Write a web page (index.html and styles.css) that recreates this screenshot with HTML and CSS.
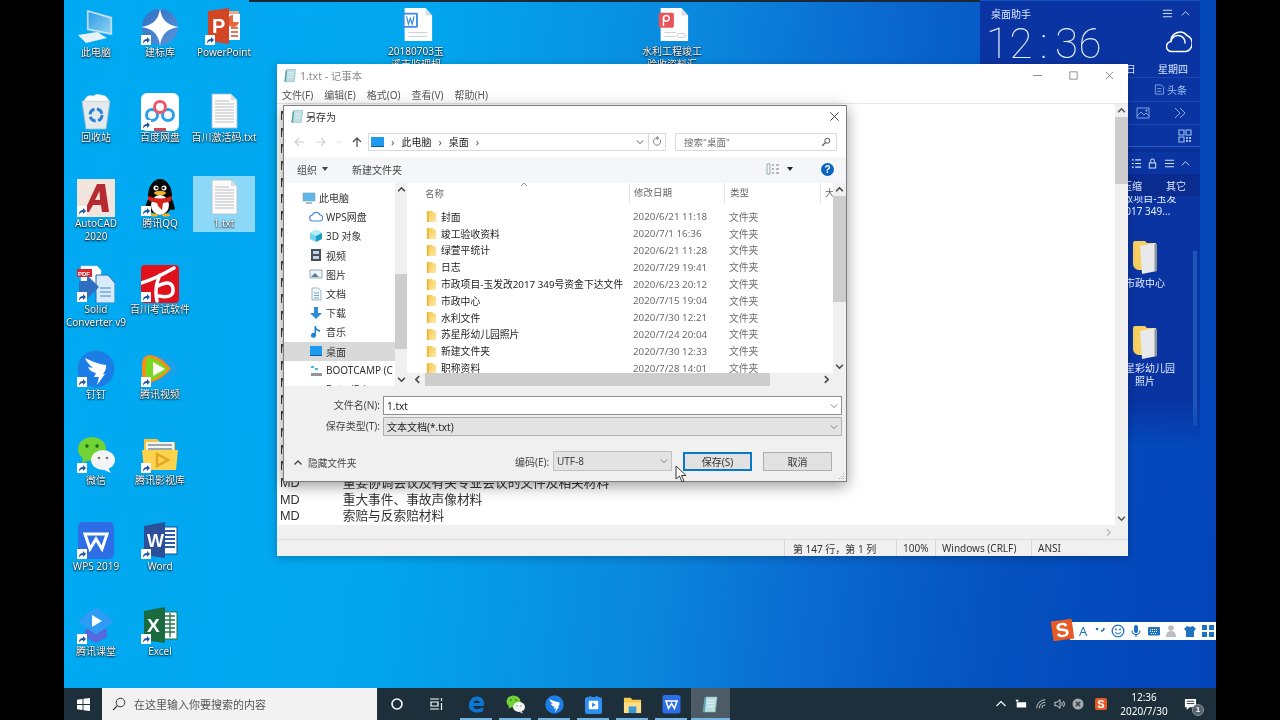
FILE: index.html
```html
<!DOCTYPE html>
<html lang="zh-CN">
<head>
<meta charset="utf-8">
<title>另存为</title>
<link rel="stylesheet" href="styles.css">
</head>
<body>
<svg class="defs" aria-hidden="true">
  <defs>
    <linearGradient id="g-star" x1="0" y1="0" x2="1" y2="1"><stop offset="0" stop-color="#2f6fc4"/><stop offset="1" stop-color="#5a93d8"/></linearGradient>
    <linearGradient id="g-screen" x1="0" y1="0" x2="1" y2="1"><stop offset="0" stop-color="#2b9de6"/><stop offset="1" stop-color="#8fd0f5"/></linearGradient>
    <linearGradient id="g-folder" x1="0" y1="0" x2="1" y2="1"><stop offset="0" stop-color="#f4c64c"/><stop offset="1" stop-color="#ffe9a6"/></linearGradient>
    <symbol id="i-pc" viewBox="0 0 38 38"><path d="M10 2 35 9V27L10 22Z" fill="#cfeaf7" stroke="#7db8d8" stroke-width=".6"/><path d="M11.500 4 33.500 10.500V25L11.500 20.500Z" fill="url(#g-screen)"/><path d="M22 24v4l5 1" fill="none" stroke="#b9dbea" stroke-width="1.500"/><path d="M1 27 20 24 30 30 9 35Z" fill="#e8f1f5"/></symbol>
    <symbol id="i-star" viewBox="0 0 38 38"><circle cx="19" cy="19" r="18" fill="url(#g-star)"/><path d="M19 0Q20.500 17 38 19 20.500 21 19 38 17.500 21 0 19 17.500 17 19 0Z" fill="#fff"/></symbol>
    <symbol id="i-ppt" viewBox="0 0 38 38"><path d="M20 3H34V30H20Z" fill="#f3a283"/><path d="M24 6H35V32H24Z" fill="#fff"/><path d="M26 20h7M26 24h7M26 28h7" stroke="#d24625" stroke-width="1.400"/><path d="M28 7a6 6 0 1 0 6 7h-6Z" fill="#e5673e"/><path d="M3 3 24 0V36L3 33Z" fill="#d24625"/><text x="7" y="25" class="svg-b" font-size="20" fill="#fff">P</text></symbol>
    <symbol id="i-bin" viewBox="0 0 38 38"><path d="M5 8H33L29 36H9Z" fill="#e4e9ec" stroke="#aebac2" stroke-width=".7"/><path d="M7 8q3-7 9-5 4-3 8-1 6 0 8 6Z" fill="#fbfbfb" stroke="#d3d9dd" stroke-width=".5"/><circle cx="19" cy="22" r="6" fill="none" stroke="#2b7fd4" stroke-width="3" stroke-dasharray="7 2.500"/></symbol>
    <symbol id="i-baidu" viewBox="0 0 38 38"><rect width="38" height="38" rx="6" fill="#fff"/><circle cx="11" cy="22" r="5.500" fill="none" stroke="#2ba0ef" stroke-width="3"/><circle cx="27" cy="22" r="5.500" fill="none" stroke="#2ba0ef" stroke-width="3"/><circle cx="19" cy="14" r="5.500" fill="none" stroke="#ee5667" stroke-width="3"/><path d="M13 38v-3h12v3Z" fill="#e0414f"/></symbol>
    <symbol id="i-txt" viewBox="0 0 38 38"><path d="M7 1H26L32 7V35H7Z" fill="#fbfbfb" stroke="#b4bcc4" stroke-width=".8"/><path d="M26 1V7H32Z" fill="#d9dee2"/><path d="M10 8H24M10 11H29M10 14H29M10 17H29M10 20H29M10 23H29M10 26H29M10 29H29" stroke="#a9afb5" stroke-width=".8"/></symbol>
    <symbol id="i-cad" viewBox="0 0 38 38"><rect width="38" height="38" fill="#f2e5dd"/><path d="M7 33 20 5H28L32 33H25L24 26H16L12 33ZM18 21H23L22.500 12Z" fill="#b62b31"/></symbol>
    <symbol id="i-qq" viewBox="0 0 38 38"><ellipse cx="19" cy="17" rx="12" ry="17" fill="#0a0a0a"/><path d="M4 30q2-10 6-14 9 4 18 0 4 4 6 14-3 2-4 0-4 6-11 6t-11-6q-2 2-4 0Z" fill="#0a0a0a"/><ellipse cx="19" cy="26" rx="9" ry="10" fill="#fff"/><path d="M7 17q12 5 24 0l-1 5q-5 2-8 2l-1 7-4-4-1-3q-6-1-9-3Z" fill="#d6241c"/><circle cx="15" cy="9" r="2.500" fill="#fff"/><circle cx="23" cy="9" r="2.500" fill="#fff"/><circle cx="15.500" cy="9" r="1.200"/><circle cx="22.500" cy="9" r="1.200"/><ellipse cx="19" cy="14" rx="6" ry="2.200" fill="#f5b324"/><ellipse cx="13" cy="36" rx="4" ry="1.500" fill="#f5b324"/><ellipse cx="25" cy="36" rx="4" ry="1.500" fill="#f5b324"/></symbol>
    <symbol id="i-solid" viewBox="0 0 38 38"><path d="M4 1H20L24 5V20H4Z" fill="#fff" stroke="#cfd6dc" stroke-width=".6"/><rect x="0" y="4" width="15" height="8" fill="#d8262c"/><text x="1" y="10.500" class="svg-b" font-size="6" fill="#fff">PDF</text><path d="M19 10H31L38 18V38H19Z" fill="#d9ebfa" stroke="#2467b5"/><path d="M23 23H34M23 27H34M23 31H34" stroke="#3e86cc" stroke-width="1.200"/><path d="M2 16H10V10L22 22 10 34V28H2Z" fill="#2f6fc2"/></symbol>
    <symbol id="i-bc" viewBox="0 0 38 38"><rect width="38" height="38" rx="4" fill="#e0101c"/><path d="M0 18Q14 14 33 3M19 10Q13 22 16 36M17 21Q31 14 32 24T18 31" fill="none" stroke="#fff" stroke-width="3.500" stroke-linecap="round"/></symbol>
    <symbol id="i-ding" viewBox="0 0 38 38"><circle cx="19" cy="19" r="18.500" fill="#1c7de6"/><path d="M8 8q12 6 21 7 1 4-3 9l2 0-8 11 2-8-5 0 2-4q-6-1-8-6l5 1q-6-5-8-10Z" fill="#fff"/></symbol>
    <symbol id="i-tv" viewBox="0 0 38 38"><path d="M8 7Q22 0 36 15 38 19 36 23 22 38 8 30Z" fill="#2a9de8" opacity=".55"/><path d="M1 14Q1 5 10 5 22 8 30 19 20 30 8 33 1 33 1 24Z" fill="#ff8a14"/><path d="M6 7Q16 8 27 19 16 30 6 31Q3 19 6 7Z" fill="#7ad81f"/><path d="M12 12 24 19 12 26Z" fill="#fff"/></symbol>
    <symbol id="i-wechat" viewBox="0 0 38 38"><ellipse cx="15" cy="13" rx="14" ry="12" fill="#71d235"/><path d="M6 21l-1 6 7-3Z" fill="#71d235"/><circle cx="10" cy="10" r="1.700" fill="#16651b"/><circle cx="20" cy="10" r="1.700" fill="#16651b"/><ellipse cx="26" cy="24" rx="12" ry="10" fill="#f4f4f4"/><path d="M31 32l3 5-7-3Z" fill="#f4f4f4"/><circle cx="22" cy="22" r="1.300" fill="#777"/><circle cx="30" cy="22" r="1.300" fill="#777"/></symbol>
    <symbol id="i-film" viewBox="0 0 38 38"><path d="M3 8V3H16L19 6H34V14H3Z" fill="#f6c53a"/><rect x="5" y="6" width="28" height="12" fill="#f4f4f4"/><path d="M7 9H31M7 13H31" stroke="#7f8f97" stroke-width="1.400"/><path d="M1 14H37L35 34H3Z" fill="#fcd34d"/><path d="M16 18 27 24 16 30Z" fill="none" stroke="#e3a526" stroke-width="2.500"/></symbol>
    <symbol id="i-wps" viewBox="0 0 38 38"><rect x="1" y="0" width="36" height="37" rx="5" fill="#2d6ee6"/><path d="M8 12H30L25 27 19 17 13 27Z" fill="none" stroke="#fff" stroke-width="3"/></symbol>
    <symbol id="i-word" viewBox="0 0 38 38"><rect x="20" y="5" width="16" height="27" fill="#fff" stroke="#23478e"/><path d="M24 9H34M24 13H34M24 17H34M24 21H34M24 25H34" stroke="#2d5cab" stroke-width="1.800"/><path d="M3 4 24 0V36L3 33Z" fill="#2b4f98"/><text x="6" y="25" class="svg-b" font-size="18" fill="#fff">W</text></symbol>
    <symbol id="i-excel" viewBox="0 0 38 38"><rect x="20" y="5" width="16" height="27" fill="#fff" stroke="#1f7145"/><path d="M24 9H34M24 13H34M24 17H34M24 21H34M24 25H34M29 6V30" stroke="#217a47" stroke-width="1.400"/><path d="M3 4 24 0V36L3 33Z" fill="#1a6b3f"/><text x="6" y="25" class="svg-b" font-size="19" fill="#fff">X</text></symbol>
    <symbol id="i-ketang" viewBox="0 0 38 38"><path d="M8 22v8l11 6 11-6V22Z" fill="#5668e0"/><path d="M19 0 37 14 19 28 1 14Z" fill="#2e9cf4"/><path d="M15 8 25 14 15 20Z" fill="#fff"/></symbol>
    <symbol id="i-docw" viewBox="0 0 38 38"><path d="M7 1H29L36 9V36H7Z" fill="#fff"/><path d="M29 1V9H36Z" fill="#d9dee2"/><rect x="5" y="6" width="16" height="16" rx="1.500" fill="#3d8ee8"/><rect x="7" y="8" width="12" height="12" fill="#fff"/><path d="M9 10l2 8 2-6 2 6 2-8" fill="none" stroke="#3d8ee8" stroke-width="1.300"/><path d="M11 27H31M11 31H31" stroke="#c5cbd0"/></symbol>
    <symbol id="i-docp" viewBox="0 0 38 38"><path d="M7 1H29L36 9V36H7Z" fill="#fff"/><path d="M29 1V9H36Z" fill="#d9dee2"/><rect x="5" y="6" width="16" height="16" rx="2" fill="#e9545a"/><circle cx="13" cy="12" r="3" fill="none" stroke="#fff" stroke-width="1.500"/><path d="M10 11V20" stroke="#fff" stroke-width="1.500"/><path d="M11 27H23M11 31H23" stroke="#c5cbd0"/><rect x="25" y="28" width="8" height="4" rx="1" fill="none" stroke="#c5cbd0"/></symbol>
    <symbol id="i-note" viewBox="0 0 20 20"><path d="M5 2H17L15 18H2Z" fill="#b9dfe2" stroke="#7aa8ad" stroke-width=".6"/><path d="M3.500 3H5.500L4 18H2Z" fill="#58a4ad"/><path d="M6 6H14M6 9H14M6 12H13" stroke="#eef7f7" stroke-width=".8"/></symbol>
    <symbol id="i-folder" viewBox="0 0 12 14"><path d="M1 1H7L8 2.500H11V13H1Z" fill="url(#g-folder)"/><path d="M1 1V13H3V2.500Z" fill="#eab73a"/></symbol>
    <symbol id="i-bigfolder" viewBox="0 0 26 34"><path d="M1 3Q1 1 3 1H13L15 3H24V30H6Q1 28 1 24Z" fill="#f7cf62"/><path d="M8 6 23 3 25 31 10 34Z" fill="#e7e9ea"/><path d="M22.500 4 25 4V31H22.500Z" fill="#8f9598"/></symbol>
    <symbol id="i-shortcut" viewBox="0 0 10 10"><rect width="10" height="10" fill="#fff"/><path d="M2 8.500C2 5 4 4 6 4V2L9 5 6 8V6C4 6 3 7 2 8.500Z" fill="#2456a8"/></symbol>
    <symbol id="i-cursor" viewBox="0 0 12 18"><path d="M1 1V14L4.500 11 7 17 9 16 6.500 10.500H11Z" fill="#fff" stroke="#222" stroke-width=".9"/></symbol>
  </defs>
</svg>

<div class="screen">
  <main class="desktop">
    <div class="icon-grid">
      <div class="dt-icon"><svg class="ic"><use href="#i-pc"/></svg><span class="dt-label">此电脑</span></div>
      <div class="dt-icon"><span class="ic-wrap"><svg class="ic"><use href="#i-star"/></svg><svg class="sc"><use href="#i-shortcut"/></svg></span><span class="dt-label">建标库</span></div>
      <div class="dt-icon"><span class="ic-wrap"><svg class="ic"><use href="#i-ppt"/></svg><svg class="sc"><use href="#i-shortcut"/></svg></span><span class="dt-label">PowerPoint</span></div>

      <div class="dt-icon"><svg class="ic"><use href="#i-bin"/></svg><span class="dt-label">回收站</span></div>
      <div class="dt-icon"><span class="ic-wrap"><svg class="ic"><use href="#i-baidu"/></svg><svg class="sc"><use href="#i-shortcut"/></svg></span><span class="dt-label">百度网盘</span></div>
      <div class="dt-icon"><svg class="ic"><use href="#i-txt"/></svg><span class="dt-label wide">百川激活码.txt</span></div>

      <div class="dt-icon"><span class="ic-wrap"><svg class="ic"><use href="#i-cad"/></svg><svg class="sc"><use href="#i-shortcut"/></svg></span><span class="dt-label">AutoCAD<br>2020</span></div>
      <div class="dt-icon"><span class="ic-wrap"><svg class="ic"><use href="#i-qq"/></svg><svg class="sc"><use href="#i-shortcut"/></svg></span><span class="dt-label">腾讯QQ</span></div>
      <div class="dt-icon selected"><svg class="ic"><use href="#i-txt"/></svg><span class="dt-label">1.txt</span></div>

      <div class="dt-icon"><span class="ic-wrap"><svg class="ic"><use href="#i-solid"/></svg><svg class="sc"><use href="#i-shortcut"/></svg></span><span class="dt-label wide">Solid<br>Converter v9</span></div>
      <div class="dt-icon"><span class="ic-wrap"><svg class="ic"><use href="#i-bc"/></svg><svg class="sc"><use href="#i-shortcut"/></svg></span><span class="dt-label wide">百川考试软件</span></div>
      <div class="cell-empty"></div>

      <div class="dt-icon"><span class="ic-wrap"><svg class="ic"><use href="#i-ding"/></svg><svg class="sc"><use href="#i-shortcut"/></svg></span><span class="dt-label">钉钉</span></div>
      <div class="dt-icon"><span class="ic-wrap"><svg class="ic"><use href="#i-tv"/></svg><svg class="sc"><use href="#i-shortcut"/></svg></span><span class="dt-label">腾讯视频</span></div>
      <div class="cell-empty"></div>

      <div class="dt-icon"><span class="ic-wrap"><svg class="ic"><use href="#i-wechat"/></svg><svg class="sc"><use href="#i-shortcut"/></svg></span><span class="dt-label">微信</span></div>
      <div class="dt-icon"><span class="ic-wrap"><svg class="ic"><use href="#i-film"/></svg><svg class="sc"><use href="#i-shortcut"/></svg></span><span class="dt-label wide">腾讯影视库</span></div>
      <div class="cell-empty"></div>

      <div class="dt-icon"><span class="ic-wrap"><svg class="ic"><use href="#i-wps"/></svg><svg class="sc"><use href="#i-shortcut"/></svg></span><span class="dt-label">WPS 2019</span></div>
      <div class="dt-icon"><span class="ic-wrap"><svg class="ic"><use href="#i-word"/></svg><svg class="sc"><use href="#i-shortcut"/></svg></span><span class="dt-label">Word</span></div>
      <div class="cell-empty"></div>

      <div class="dt-icon"><span class="ic-wrap"><svg class="ic"><use href="#i-ketang"/></svg><svg class="sc"><use href="#i-shortcut"/></svg></span><span class="dt-label">腾讯课堂</span></div>
      <div class="dt-icon"><span class="ic-wrap"><svg class="ic"><use href="#i-excel"/></svg><svg class="sc"><use href="#i-shortcut"/></svg></span><span class="dt-label">Excel</span></div>
    </div>

    <div class="top-strip"></div>

    <div class="free-file file-a"><svg class="ic"><use href="#i-docw"/></svg><span class="dt-label">20180703玉<br>溪市监理规</span></div>
    <div class="free-file file-b"><svg class="ic"><use href="#i-docp"/></svg><span class="dt-label">水利工程竣工<br>验收资料汇</span></div>

    <aside class="helper">
      <div class="hp-head"><span>桌面助手</span>
        <span class="hp-ctrl">
          <svg class="hp-i" viewBox="0 0 12 12"><path d="M1 2.500H11M1 6H11M1 9.500H11" stroke="#cfe0f8" stroke-width="1.200"/></svg>
          <svg class="hp-i" viewBox="0 0 12 12"><path d="M2 8 6 4 10 8" fill="none" stroke="#cfe0f8"/></svg>
        </span>
      </div>
      <div class="hp-clock">
        <span class="clock-text">12<span class="clock-colon">:</span>36</span>
        <svg class="cloud" viewBox="0 0 26 24"><path d="M6 21.500a5 5 0 0 1-1-10 9 9 0 0 1 16-6 8.500 8.500 0 0 1-1 16Z" fill="none" stroke="#fff" stroke-width="1.500"/><path d="M5 11.500a7 7 0 0 1 14 2" fill="none" stroke="#fff" stroke-width="1.500"/></svg>
      </div>
      <div class="hp-date"><span>2020年07月30日</span><span>星期四</span></div>
      <div class="hp-news"><svg class="hp-i" viewBox="0 0 12 12"><path d="M1.500 1H8L10.500 3.500V11H1.500ZM3.500 5H8M3.500 8H8" fill="none" stroke="#9fc0ee" stroke-width=".8"/></svg><span>头条</span></div>
      <div class="hp-tools">
        <svg class="hp-i big" viewBox="0 0 14 12"><path d="M1 1H13V11H1ZM1 9 5 5 8 8 10 6 13 9" fill="none" stroke="#9fc0ee" stroke-width=".8"/><circle cx="10.500" cy="3.500" r="1" fill="#9fc0ee"/></svg>
        <svg class="hp-i big" viewBox="0 0 14 12"><path d="M2 1 7 6 2 11M7 1 12 6 7 11" fill="none" stroke="#9fc0ee" stroke-width=".9"/></svg>
      </div>
      <div class="hp-qr"><svg class="hp-i big" viewBox="0 0 14 14"><path d="M1 1H6V6H1ZM8 1H13V6H8ZM1 8H6V13H1Z" fill="none" stroke="#9fc0ee" stroke-width="1.100"/><path d="M8 8H10V10H8ZM11 8H13V10H11ZM8 11H10V13H8ZM11 11H13V13H11Z" fill="#9fc0ee"/></svg></div>
      <div class="hp-head second">
        <span>工作文件</span>
        <span class="hp-ctrl wide-ctrl">
          <svg class="hp-i" viewBox="0 0 12 12"><path d="M1 2H3M1 6H3M1 10H3M4.500 2H11M4.500 6H11M4.500 10H11" stroke="#cfe0f8" stroke-width="1.200"/></svg>
          <svg class="hp-i" viewBox="0 0 12 12"><path d="M2.500 5.500H9.500V11H2.500ZM4 5.500V3A2 2 0 0 1 8 3V5.500" fill="none" stroke="#cfe0f8" stroke-width="1.100"/></svg>
          <svg class="hp-i" viewBox="0 0 12 12"><path d="M1 2.500H11M1 6H11M1 9.500H11" stroke="#cfe0f8" stroke-width="1.200"/></svg>
          <svg class="hp-i" viewBox="0 0 12 12"><path d="M2 8 6 4 10 8" fill="none" stroke="#cfe0f8"/></svg>
        </span>
      </div>
      <div class="hp-tabs"><span>文件</span><span>压缩</span><span>其它</span></div>
      <div class="hp-files">
        <div class="hp-file first"><span>市政项目-玉发<br>2017 349...</span></div>
        <div class="hp-file"><svg class="bf"><use href="#i-bigfolder"/></svg><span>市政中心</span></div>
        <div class="hp-file"><svg class="bf"><use href="#i-bigfolder"/></svg><span>苏星彩幼儿园<br>照片</span></div>
      </div>
      <div class="hp-scroll"></div>
    </aside>

    <section class="notepad">
      <header class="np-title">
        <svg class="np-icon"><use href="#i-note"/></svg><span class="np-name">1.txt - 记事本</span>
        <span class="np-btns">
          <svg class="np-btn" viewBox="0 0 12 12"><path d="M1 6H11" stroke="#888"/></svg>
          <svg class="np-btn" viewBox="0 0 12 12"><path d="M2 2H10V10H2Z" fill="none" stroke="#888"/></svg>
          <svg class="np-btn" viewBox="0 0 12 12"><path d="M2 2 10 10M10 2 2 10" stroke="#888"/></svg>
        </span>
      </header>
      <nav class="np-menu"><span>文件(F)</span><span>编辑(E)</span><span>格式(O)</span><span>查看(V)</span><span>帮助(H)</span></nav>
      <div class="np-body">
        <div class="np-text">
          <div class="np-line">MD</div><div class="np-line">MD</div><div class="np-line">MD</div><div class="np-line">MD</div><div class="np-line">MD</div>
          <div class="np-line">MD</div><div class="np-line">MD</div><div class="np-line">MD</div><div class="np-line">MD</div><div class="np-line">MD</div>
          <div class="np-line">MD</div><div class="np-line">MD</div><div class="np-line">MD</div><div class="np-line">MD</div><div class="np-line">MD</div>
          <div class="np-line">MD</div><div class="np-line">MD</div><div class="np-line">MD</div><div class="np-line">MD</div><div class="np-line">MD</div>
          <div class="np-line">MD</div><div class="np-line">MD</div>
          <div class="np-line">MD<span class="np-desc">重要协调会议及有关专业会议的文件及相关材料</span></div>
          <div class="np-line">MD<span class="np-desc">重大事件、事故声像材料</span></div>
          <div class="np-line">MD<span class="np-desc">索赔与反索赔材料</span></div>
        </div>
        <div class="np-vscroll">
          <svg class="arrow" viewBox="0 0 8 8"><path d="M1 5.500 4 2.500 7 5.500" fill="none" stroke="#555" stroke-width="1.300"/></svg>
          <div class="np-thumb"></div>
          <svg class="arrow end" viewBox="0 0 8 8"><path d="M1 2.500 4 5.500 7 2.500" fill="none" stroke="#555" stroke-width="1.300"/></svg>
        </div>
      </div>
      <div class="np-hscroll"><svg class="arrow right" viewBox="0 0 8 8"><path d="M2.500 1 5.500 4 2.500 7" fill="none" stroke="#bbb" stroke-width="1.200"/></svg></div>
      <footer class="np-status">
        <span class="st st-pos">第 147 行，第 1 列</span>
        <span class="st st-zoom">100%</span>
        <span class="st st-eol">Windows (CRLF)</span>
        <span class="st st-enc">ANSI</span>
      </footer>
    </section>

    <section class="dialog">
      <header class="dlg-title">
        <svg class="np-icon"><use href="#i-note"/></svg><span>另存为</span>
        <svg class="dlg-close" viewBox="0 0 12 12"><path d="M1.500 1.500 10.500 10.500M10.500 1.500 1.500 10.500" stroke="#333" stroke-width="1"/></svg>
      </header>
      <div class="dlg-addr">
        <span class="nav-arrows">
          <svg class="na" viewBox="0 0 12 12"><path d="M11 6H2M6 2 2 6 6 10" fill="none" stroke="#d0d0d0" stroke-width="1.200"/></svg>
          <svg class="na" viewBox="0 0 12 12"><path d="M1 6H10M6 2 10 6 6 10" fill="none" stroke="#d0d0d0" stroke-width="1.200"/></svg>
          <svg class="na small" viewBox="0 0 12 12"><path d="M3 5 6 8 9 5" fill="none" stroke="#d0d0d0" stroke-width="1.200"/></svg>
          <svg class="na" viewBox="0 0 12 12"><path d="M6 11V2M2 6 6 2 10 6" fill="none" stroke="#555" stroke-width="1.300"/></svg>
        </span>
        <div class="addr-box">
          <span class="addr-pc"></span>
          <span class="crumb-sep">›</span><span class="crumb">此电脑</span>
          <span class="crumb-sep">›</span><span class="crumb">桌面</span>
          <span class="crumb-sep">›</span>
          <svg class="addr-drop" viewBox="0 0 10 10"><path d="M1 3 5 7 9 3" fill="none" stroke="#555" stroke-width="1.200"/></svg>
          <svg class="addr-refresh" viewBox="0 0 12 12"><path d="M9.500 3.500A4.300 4.300 0 1 1 6 1.800M6 .2V3.600L8.200 1.900Z" fill="none" stroke="#666" stroke-width="1"/></svg>
        </div>
        <div class="search-box"><span>搜索"桌面"</span><svg class="search-i" viewBox="0 0 12 12"><circle cx="7.500" cy="4.500" r="3" fill="none" stroke="#555" stroke-width="1.200"/><path d="M5.300 6.700 1.500 10.500" stroke="#555" stroke-width="1.500"/></svg></div>
      </div>
      <div class="dlg-tools">
        <span class="tool-org">组织<i class="caret"></i></span>
        <span class="tool-new">新建文件夹</span>
        <span class="tool-right">
          <svg class="view-i" viewBox="0 0 14 12"><path d="M1 1H4V11H1Z" fill="none" stroke="#9aa"/><path d="M6 2H8M10 2H13M6 6H8M10 6H13M6 10H8M10 10H13" stroke="#777"/></svg>
          <i class="caret dark"></i>
          <span class="help">?</span>
        </span>
      </div>
      <div class="dlg-main">
        <div class="tree">
          <div class="tree-items">
            <div class="tree-item root"><svg class="t-i" viewBox="0 0 14 14"><path d="M1 2H13V10H1Z" fill="#5fb7ea" stroke="#7f9fb5" stroke-width=".6"/><path d="M4 12H10" stroke="#8aa" stroke-width="1.500"/></svg>此电脑</div>
            <div class="tree-item"><svg class="t-i" viewBox="0 0 14 14"><path d="M4 11a3 3 0 0 1-.5-6 4 4 0 0 1 7.500 0 3 3 0 0 1-.5 6Z" fill="#fff" stroke="#4a86e0" stroke-width="1.200"/></svg>WPS网盘</div>
            <div class="tree-item"><svg class="t-i" viewBox="0 0 14 14"><path d="M7 1 13 4V10L7 13Z" fill="#1a9bc4"/><path d="M7 1 1 4V10L7 13Z" fill="#6ed3ec"/><path d="M1 4 7 7 13 4 7 1Z" fill="#b7ecf7"/></svg>3D 对象</div>
            <div class="tree-item"><svg class="t-i" viewBox="0 0 14 14"><path d="M2 1H12V13H2Z" fill="#44505e"/><path d="M4 3H10V6H4ZM4 8H10V11H4Z" fill="#c8d4de"/></svg>视频</div>
            <div class="tree-item"><svg class="t-i" viewBox="0 0 14 14"><path d="M1 3H13V11H1Z" fill="#eaf3f8" stroke="#7d8b95" stroke-width=".7"/><path d="M2 10 6 6 10 10Z" fill="#5a7c94"/></svg>图片</div>
            <div class="tree-item"><svg class="t-i" viewBox="0 0 14 14"><path d="M3 1H9L12 4V13H3Z" fill="#f3f8fb" stroke="#7d99b0" stroke-width=".7"/><path d="M5 6H10M5 8.500H10M5 11H10" stroke="#4f8fc9" stroke-width=".8"/></svg>文档</div>
            <div class="tree-item"><svg class="t-i" viewBox="0 0 14 14"><path d="M5 1H9V7H13L7 13 1 7H5Z" fill="#2f8ad8"/></svg>下载</div>
            <div class="tree-item"><svg class="t-i" viewBox="0 0 14 14"><path d="M7 1V10.500A2.500 2.500 0 1 1 5.500 8V1H7Q7 4 11 5V7Q8 6 7 5Z" fill="#1d86dc"/></svg>音乐</div>
            <div class="tree-item active"><svg class="t-i" viewBox="0 0 14 14"><path d="M1 2H13V11H1Z" fill="#1e9bef"/><path d="M1 11H13V12H1Z" fill="#0c63a8"/></svg>桌面</div>
            <div class="tree-item"><svg class="t-i" viewBox="0 0 14 14"><path d="M2 10H13V13H2Z" fill="#8f959b"/><path d="M2 3H5V5H2ZM6 5H9V7H6Z" fill="#4db5e8"/></svg>BOOTCAMP (C</div>
            <div class="tree-item"><svg class="t-i" viewBox="0 0 14 14"><path d="M2 10H13V13H2Z" fill="#8f959b"/></svg>Data (D:)</div>
          </div>
          <div class="tree-scroll">
            <svg class="arrow" viewBox="0 0 8 8"><path d="M1 5.500 4 2.500 7 5.500" fill="none" stroke="#444" stroke-width="1.400"/></svg>
            <div class="tree-thumb"></div>
            <svg class="arrow end" viewBox="0 0 8 8"><path d="M1 2.500 4 5.500 7 2.500" fill="none" stroke="#444" stroke-width="1.400"/></svg>
          </div>
        </div>
        <div class="list">
          <div class="list-upper">
            <div class="list-cols">
              <div class="list-head">
                <span class="col-name">名称<svg class="sort" viewBox="0 0 8 5"><path d="M1 4 4 1 7 4" fill="none" stroke="#999"/></svg></span>
                <span class="col-date">修改日期</span><span class="col-type">类型</span><span class="col-size">大</span>
              </div>
              <div class="rows">
                <div class="row"><span class="col-name"><svg class="fo"><use href="#i-folder"/></svg>封面</span><span class="col-date">2020/6/21 11:18</span><span class="col-type">文件夹</span></div>
                <div class="row"><span class="col-name"><svg class="fo"><use href="#i-folder"/></svg>竣工验收资料</span><span class="col-date">2020/7/1 16:36</span><span class="col-type">文件夹</span></div>
                <div class="row"><span class="col-name"><svg class="fo"><use href="#i-folder"/></svg>绿萱平统计</span><span class="col-date">2020/6/21 11:28</span><span class="col-type">文件夹</span></div>
                <div class="row"><span class="col-name"><svg class="fo"><use href="#i-folder"/></svg>日志</span><span class="col-date">2020/7/29 19:41</span><span class="col-type">文件夹</span></div>
                <div class="row"><span class="col-name"><svg class="fo"><use href="#i-folder"/></svg>市政项目-玉发改2017 349号资金下达文件</span><span class="col-date">2020/6/23 20:12</span><span class="col-type">文件夹</span></div>
                <div class="row"><span class="col-name"><svg class="fo"><use href="#i-folder"/></svg>市政中心</span><span class="col-date">2020/7/15 19:04</span><span class="col-type">文件夹</span></div>
                <div class="row"><span class="col-name"><svg class="fo"><use href="#i-folder"/></svg>水利文件</span><span class="col-date">2020/7/30 12:21</span><span class="col-type">文件夹</span></div>
                <div class="row"><span class="col-name"><svg class="fo"><use href="#i-folder"/></svg>苏星彤幼儿园照片</span><span class="col-date">2020/7/24 20:04</span><span class="col-type">文件夹</span></div>
                <div class="row"><span class="col-name"><svg class="fo"><use href="#i-folder"/></svg>新建文件夹</span><span class="col-date">2020/7/30 12:33</span><span class="col-type">文件夹</span></div>
                <div class="row"><span class="col-name"><svg class="fo"><use href="#i-folder"/></svg>职称资料</span><span class="col-date">2020/7/28 14:01</span><span class="col-type">文件夹</span></div>
              </div>
            </div>
            <div class="list-vscroll">
              <svg class="arrow" viewBox="0 0 8 8"><path d="M1 5.500 4 2.500 7 5.500" fill="none" stroke="#444" stroke-width="1.400"/></svg>
              <div class="list-thumb"></div>
              <svg class="arrow end" viewBox="0 0 8 8"><path d="M1 2.500 4 5.500 7 2.500" fill="none" stroke="#444" stroke-width="1.400"/></svg>
            </div>
          </div>
          <div class="list-hscroll">
            <svg class="arrow" viewBox="0 0 8 8"><path d="M5.500 1 2.500 4 5.500 7" fill="none" stroke="#444" stroke-width="1.400"/></svg>
            <div class="h-thumb"></div>
            <svg class="arrow right-a" viewBox="0 0 8 8"><path d="M2.500 1 5.500 4 2.500 7" fill="none" stroke="#444" stroke-width="1.400"/></svg>
          </div>
        </div>
      </div>
      <div class="dlg-foot">
        <div class="form">
          <label class="f-label">文件名(N):</label>
          <div class="f-input"><span>1.txt</span><svg class="f-drop" viewBox="0 0 10 10"><path d="M1 3 5 7 9 3" fill="none" stroke="#666"/></svg></div>
          <label class="f-label">保存类型(T):</label>
          <div class="f-input gray"><span>文本文档(*.txt)</span><svg class="f-drop" viewBox="0 0 10 10"><path d="M1 3 5 7 9 3" fill="none" stroke="#666"/></svg></div>
        </div>
        <div class="actions">
          <span class="hide-folders"><svg class="hf" viewBox="0 0 10 10"><path d="M1.500 6.500 5 3 8.500 6.500" fill="none" stroke="#444" stroke-width="1.300"/></svg>隐藏文件夹</span>
          <span class="enc-label">编码(E):</span>
          <div class="enc-select"><span>UTF-8</span><svg class="f-drop" viewBox="0 0 10 10"><path d="M1 3 5 7 9 3" fill="none" stroke="#666"/></svg></div>
          <button class="btn primary">保存(S)</button>
          <button class="btn">取消</button>
        </div>
        <svg class="grip" viewBox="0 0 8 8"><path d="M6 1h1v1H6ZM6 4h1v1H6ZM6 6h1v1H6ZM4 4h1v1H4ZM4 6h1v1H4ZM2 6h1v1H2Z" fill="#aaa"/></svg>
      </div>
    </section>

    <svg class="cursor"><use href="#i-cursor"/></svg>

    <div class="ime">
      <span class="ime-s">S</span>
      <div class="ime-bar">
        <span class="ime-a">A</span>
        <svg class="ime-i" viewBox="0 0 14 14"><circle cx="4" cy="5" r="1.300" fill="#1e72c0"/><path d="M8 7q3 0 3-3" fill="none" stroke="#1e72c0" stroke-width="1.500"/></svg>
        <svg class="ime-i" viewBox="0 0 14 14"><circle cx="7" cy="7" r="5.800" fill="none" stroke="#1e72c0" stroke-width="1.300"/><circle cx="5" cy="5.500" r="1" fill="#1e72c0"/><circle cx="9" cy="5.500" r="1" fill="#1e72c0"/><path d="M4 8.500q3 3 6 0" fill="none" stroke="#1e72c0"/></svg>
        <svg class="ime-i" viewBox="0 0 14 14"><rect x="5" y="1" width="4" height="8" rx="2" fill="#1e72c0"/><path d="M3 6.500a4 4 0 0 0 8 0M7 11V13" fill="none" stroke="#1e72c0" stroke-width="1.200"/></svg>
        <svg class="ime-i" viewBox="0 0 14 14"><rect x="1" y="3" width="12" height="8.500" rx="1" fill="#1e72c0"/><path d="M3 5.500H11M3 7.500H11M4 9.500H10" stroke="#fff" stroke-dasharray="1 1"/></svg>
        <svg class="ime-i" viewBox="0 0 14 14"><circle cx="6" cy="4" r="2.800" fill="#b9bcc0"/><path d="M1 13q0-6 5-6t5 6Z" fill="#b9bcc0"/></svg>
        <svg class="ime-i" viewBox="0 0 14 14"><path d="M4 2 7 3 10 2 13 5 11 7V13H3V7L1 5Z" fill="#1e72c0"/></svg>
        <svg class="ime-i" viewBox="0 0 14 14"><path d="M1 1H6V6H1ZM8 1H13V6H8ZM1 8H6V13H1ZM8 8H13V13H8Z" fill="#1e72c0"/></svg>
      </div>
    </div>

    <footer class="taskbar">
      <div class="tb-start"><svg class="win" viewBox="0 0 14 14"><path d="M0 2 6 1V6.500H0ZM7 .8 14 0V6.500H7ZM0 7.500H6V13L0 12ZM7 7.500H14V14L7 13.200Z" fill="#fff"/></svg></div>
      <div class="tb-search"><svg class="mag" viewBox="0 0 14 14"><circle cx="8.500" cy="5.500" r="4.300" fill="none" stroke="#333" stroke-width="1"/><path d="M5.500 8.500 1 13" stroke="#333" stroke-width="1.100"/></svg><span>在这里输入你要搜索的内容</span></div>
      <div class="tb-btn"><svg class="tb-i" viewBox="0 0 16 16"><circle cx="8" cy="8" r="5" fill="none" stroke="#fff" stroke-width="1.600"/></svg></div>
      <div class="tb-btn"><svg class="tb-i" viewBox="0 0 16 16"><path d="M2 3H11M2 13H11M3 6H10V10H3ZM13.500 2V5M13.500 7V14" fill="none" stroke="#fff" stroke-width="1.200"/></svg></div>
      <div class="tb-gap"></div>
      <div class="tb-app run"><svg class="tb-i big" viewBox="0 0 20 20"><path d="M2 11C2 5 6 1.500 11 1.500 16 1.500 18.500 6 18 11.500H6.500C7 15 12 16 17 13V17C11 20 2 18.500 2 11ZM6.500 8.500H13.500C13.500 5 7.500 5 6.500 8.500Z" fill="#0a78d0"/></svg></div>
      <div class="tb-app run"><svg class="tb-i big"><use href="#i-wechat"/></svg></div>
      <div class="tb-app run"><svg class="tb-i big"><use href="#i-ding"/></svg></div>
      <div class="tb-app run"><svg class="tb-i big" viewBox="0 0 20 20"><rect x="1" y="2" width="18" height="18" rx="3" fill="#2f8ff0"/><path d="M6 1 9 4M14 1 11 4" stroke="#2f8ff0" stroke-width="1.500"/><rect x="5" y="6" width="10" height="9" rx="1" fill="#fff"/><path d="M8.500 8 12.500 10.500 8.500 13Z" fill="#2f8ff0"/></svg></div>
      <div class="tb-app run"><svg class="tb-i big" viewBox="0 0 20 20"><path d="M1 3H8L10 5H19V19H1Z" fill="#f7c94f"/><path d="M1 8H19V19H1Z" fill="#ffe08a"/><rect x="6" y="12" width="8" height="7" fill="#3a9ad8"/></svg></div>
      <div class="tb-app run"><svg class="tb-i big"><use href="#i-wps"/></svg></div>
      <div class="tb-app run active"><svg class="tb-i big"><use href="#i-note"/></svg></div>
      <div class="tray">
        <svg class="tray-i" viewBox="0 0 12 12"><path d="M1.500 8 6 3.500 10.500 8" fill="none" stroke="#fff" stroke-width="1.100"/></svg>
        <svg class="tray-i" viewBox="0 0 14 12"><path d="M1 1H4V3H1ZM2 4H13V10H2Z" fill="#fff"/></svg>
        <svg class="tray-i" viewBox="0 0 14 14"><path d="M2 12A10 10 0 0 1 12 2M5 12A7 7 0 0 1 12 5M8 12A4 4 0 0 1 12 8" fill="none" stroke="#d8dde0" stroke-width="1"/></svg>
        <svg class="tray-i n" viewBox="0 0 14 14"><path d="M1 5H3.500L7 2V12L3.500 9H1Z" fill="none" stroke="#fff" stroke-width=".9"/><path d="M9 5Q10.500 7 9 9M11 3.500Q13.500 7 11 10.500" fill="none" stroke="#fff" stroke-width=".9"/></svg>
        <svg class="tray-i n2" viewBox="0 0 12 12"><circle cx="6" cy="6" r="5.500" fill="#a3abb0"/><path d="M3.800 3.800 8.200 8.200M8.200 3.800 3.800 8.200" stroke="#2a3a44" stroke-width="1.300"/></svg>
        <span class="tray-s"><span>S</span></span>
        <div class="tray-clock"><span>12:36</span><span>2020/7/30</span></div>
        <div class="tray-note"><svg class="note-i" viewBox="0 0 14 14"><path d="M1 1H13V10H6L3 13V10H1Z" fill="#fff"/><path d="M3 3.500H11M3 6H11" stroke="#1f303c"/></svg><span class="note-badge">1</span></div>
      </div>
    </footer>
  </main>
</div>
</body>
</html>
```

FILE: styles.css
```css
* { box-sizing: border-box; }
html, body { margin: 0; padding: 0; background: #000; }
body { width: 1280px; height: 720px; overflow: hidden; font-family: "Noto Sans", "Noto Sans CJK SC", sans-serif; font-size: 10px; color: #222; }
.defs { position: absolute; width: 0; height: 0; overflow: hidden; }
.svg-b { font-family: "Liberation Sans", sans-serif; font-weight: 700; }

.screen { width: 1280px; height: 720px; padding: 0 64px; background: #000; filter: blur(.35px); }
.desktop { position: relative; width: 1152px; height: 720px; display: flex; flex-direction: column; overflow: hidden;
  background: linear-gradient(96deg, #00aaf2 0%, #02a6ef 30%, #0a88dd 52%, #0a6ad0 66%, #0450bf 82%, #0444ba 100%); }

/* desktop icons */
.icon-grid { flex: 1; min-height: 0; display: grid; grid-template-columns: repeat(3, 64px); grid-auto-rows: 85.7px; padding-top: 7.5px; width: 192px; }
.dt-icon { position: relative; display: flex; flex-direction: column; align-items: center; height: 70px; }
.ic-wrap { position: relative; display: block; width: 38px; height: 38px; }
.ic { display: block; width: 38px; height: 38px; flex: none; }
.sc { position: absolute; left: 0; bottom: 1px; width: 10px; height: 10px; }
.dt-label { color: #fff; font-size: 10px; line-height: 13px; text-align: center; white-space: nowrap; text-shadow: 0 1px 2px #000, 0 0 1px rgba(0,0,0,.8); }
.selected::before { content: ""; position: absolute; z-index: 0; left: 1px; right: 1px; top: -3px; height: 56px; background: rgba(255,255,255,.55); }
.selected > * { position: relative; }

.top-strip { position: absolute; left: 185px; top: 0; width: 787px; height: 2px; background: #1b2732; }
.free-file { position: absolute; top: 7px; width: 64px; display: flex; flex-direction: column; align-items: center; }
.file-a { left: 320px; }
.file-b { left: 576px; }
.free-file .ic { height: 36px; margin-bottom: 2px; }

/* helper panel */
.helper { position: absolute; left: 916px; top: 0; width: 220px; height: 445px; background: #0a34a2; color: #dce8fb; display: flex; flex-direction: column; border-top: 1px solid #1552c0;
  -webkit-mask-image: linear-gradient(#000 400px, transparent 445px); mask-image: linear-gradient(#000 400px, transparent 445px); }
.hp-head { height: 27px; flex: none; display: flex; align-items: center; justify-content: space-between; padding: 0 9px 2px 11px; font-size: 10px; }
.hp-ctrl { display: flex; gap: 7px; align-items: center; }
.wide-ctrl { gap: 5.500px; }
.hp-i { width: 11px; height: 11px; display: block; }
.hp-i.big { width: 14px; height: 14px; }
.hp-clock { height: 32px; flex: none; display: flex; justify-content: space-between; align-items: flex-start; padding: 0 8px 0 6px; }
.clock-text { font-family: Roboto, "Noto Sans", sans-serif; font-weight: 100; font-size: 42px; line-height: 32px; color: #e6f0ff; letter-spacing: .5px; }
.clock-colon { margin: 0 7px; }
.cloud { width: 26px; height: 24px; margin-top: 2px; }
.hp-date { height: 18px; flex: none; display: flex; justify-content: space-between; align-items: center; padding: 0 12px 0 80px; font-size: 10px; border-bottom: 1px solid #1a46ae; }
.hp-news { height: 23px; flex: none; display: flex; justify-content: flex-end; align-items: center; gap: 2px; padding-right: 13px; color: #9fc0ee; font-size: 10px; }
.hp-tools { height: 24px; flex: none; display: flex; justify-content: flex-end; align-items: center; gap: 23px; padding-right: 13px; border-top: 1px solid #1a46ae; border-bottom: 1px solid #1a46ae; }
.hp-qr { height: 22px; flex: none; display: flex; justify-content: flex-end; align-items: center; padding-right: 8px; border-bottom: 1px solid #2c5cc0; }
.hp-head.second { height: 25px; margin-top: 2px; border-top: 3px solid #0a2f93; padding-bottom: 0; }
.hp-tabs { position: relative; z-index: 1; height: 22px; flex: none; display: flex; justify-content: flex-end; gap: 24px; align-items: center; padding-right: 14px; background: #0a2c8e; font-size: 10px; }
.hp-files { width: 90px; margin-left: 120px; display: flex; flex-direction: column; align-items: center; font-size: 10px; text-align: center; line-height: 13px; color: #e6eefc; }
.hp-file { display: flex; flex-direction: column; align-items: center; white-space: nowrap; }
.hp-file.first { height: 47.500px; margin-top: -4px; }
.bf { width: 26px; height: 34px; margin-bottom: 3px; }
.hp-file + .hp-file { height: 85.500px; }
.hp-scroll { position: absolute; left: 213px; top: 250px; width: 4px; height: 175px; background: #1f56b8; }

/* notepad window */
.notepad { position: absolute; left: 213px; top: 64px; width: 851px; height: 492px; background: #fff; display: flex; flex-direction: column; box-shadow: 0 2px 8px rgba(0,0,0,.25); }
.np-title { height: 22px; flex: none; display: flex; align-items: center; padding-left: 6px; font-size: 10px; color: #8a8a8a; }
.np-icon { width: 15px; height: 15px; flex: none; margin-right: 2px; }
.np-name { font-size: 10.500px; }
.np-btns { margin-left: auto; display: flex; gap: 25px; padding-right: 13px; }
.np-btn { width: 11px; height: 11px; }
.np-menu { height: 18px; flex: none; display: flex; gap: 11px; align-items: center; padding-left: 5px; font-size: 10px; color: #555; border-bottom: 1px solid #e6e6e6; }
.np-body { flex: 1; min-height: 0; display: flex; }
.np-text { flex: 1; min-width: 0; overflow: hidden; display: flex; flex-direction: column; justify-content: flex-end; padding: 0 0 0 3px; font-family: "Liberation Sans", "Noto Sans CJK SC", sans-serif; font-size: 12.700px; line-height: 16.700px; color: #333; }
.np-line { flex: none; height: 16.700px; }
.np-desc { margin-left: 43px; }
.np-vscroll, .tree-scroll, .list-vscroll { flex: none; display: flex; flex-direction: column; align-items: center; background: #f0f0f0; }
.np-vscroll { width: 13px; }
.arrow { width: 9px; height: 9px; flex: none; margin: 2px 0; }
.arrow.end { margin-top: auto; }
.np-thumb { width: 100%; height: 67px; background: #cdcdcd; }
.np-hscroll { height: 14px; flex: none; background: #f0f0f0; display: flex; justify-content: flex-end; align-items: center; padding-right: 15px; }
.np-status { height: 17px; flex: none; display: flex; align-items: center; background: #f0f0f0; border-top: 1px solid #dcdcdc; font-size: 10px; color: #333; padding-left: 507px; }
.st { height: 100%; display: flex; align-items: center; border-left: 1px solid #d8d8d8; padding-left: 6px; }
.st-pos { width: 112px; padding-left: 8px; }
.st-zoom { width: 39px; }
.st-eol { width: 96px; }

/* save dialog */
.dialog { position: absolute; left: 219px; top: 105px; width: 564px; height: 377px; background: #fff; border: 1px solid #7d7d7d; display: flex; flex-direction: column; box-shadow: 0 4px 14px rgba(0,0,0,.4); }
.dlg-title { height: 22px; flex: none; display: flex; align-items: center; padding: 0 0 2px 6px; font-size: 10px; color: #333; }
.dlg-title .np-icon { margin-right: 1px; }
.dlg-close { width: 11px; height: 11px; margin-left: auto; margin-right: 6px; }
.dlg-addr { height: 29px; flex: none; display: flex; align-items: center; padding: 0 9px 2px 9px; }
.nav-arrows { width: 75px; display: flex; align-items: center; gap: 10px; }
.na { width: 12px; height: 12px; flex: none; }
.na.small { width: 8px; margin: 0 -2px; }
.addr-box { width: 298px; height: 18px; display: flex; align-items: center; border: 1px solid #dadada; padding-left: 2px; font-size: 10px; color: #222; }
.addr-pc { width: 13px; height: 10px; background: #1e9bef; border-bottom: 1px solid #0c5c9c; margin-right: 2px; }
.crumb-sep { color: #555; margin: 0 5px; font-size: 11px; line-height: 14px; }
.crumb { margin: 0 2px; }
.addr-drop { width: 8px; height: 8px; margin-left: auto; margin-right: 4px; }
.addr-refresh { width: 17px; height: 17px; padding: 3px; border-left: 1px solid #dadada; }
.search-box { margin-left: 9px; width: 162px; height: 18px; display: flex; align-items: center; justify-content: space-between; border: 1px solid #dadada; padding: 0 5px 0 8px; font-size: 9.500px; color: #6f6f6f; }
.search-i { width: 10px; height: 10px; }
.dlg-tools { height: 26px; flex: none; display: flex; align-items: center; background: #f4f6f9; padding: 0 12px 2px 13px; font-size: 10px; color: #444; }
.tool-org { display: flex; align-items: center; gap: 5px; width: 55px; }
.caret { display: block; width: 0; height: 0; border: 3px solid transparent; border-top: 4px solid #444; border-bottom: 0; }
.caret.dark { border-top-color: #222; }
.tool-right { margin-left: auto; display: flex; align-items: center; gap: 7px; }
.view-i { width: 14px; height: 12px; }
.help { width: 13px; height: 13px; margin-left: 21px; border-radius: 50%; background: #0a64c0; color: #fff; font: 700 10px/13px "Liberation Sans", sans-serif; text-align: center; }
.dlg-main { height: 203px; flex: none; display: flex; }
.tree { width: 123px; flex: none; display: flex; }
.tree-items { flex: 1; min-width: 0; overflow: hidden; padding-top: 5px; }
.tree-item { height: 19.200px; display: flex; align-items: center; padding-left: 25px; gap: 3px; font-size: 10px; color: #333; white-space: nowrap; }
.tree-item.root { padding-left: 18px; }
.tree-item.active { background: #d9d9d9; }
.t-i { width: 14px; height: 14px; flex: none; }
.tree-scroll { width: 12px; }
.tree-thumb { width: 100%; height: 75px; margin-top: 78px; background: #cdcdcd; }
.list { flex: 1; min-width: 0; display: flex; flex-direction: column; }
.list-upper { flex: 1; min-height: 0; display: flex; }
.list-cols { flex: 1; min-width: 0; overflow: hidden; }
.list-head { height: 21px; display: flex; align-items: center; font-size: 9.500px; color: #666; }
.col-name { position: relative; width: 222px; flex: none; display: flex; align-items: center; padding-left: 18px; white-space: nowrap; }
.col-date { width: 95px; flex: none; padding-left: 4px; white-space: nowrap; }
.col-type { width: 96px; flex: none; padding-left: 5px; white-space: nowrap; }
.col-size { flex: 1; padding-left: 4px; overflow: hidden; }
.list-head span { height: 21px; line-height: 19px; }
.list-head .col-date, .list-head .col-type, .list-head .col-size { border-left: 1px solid #e4e4e4; }
.sort { position: absolute; left: 113px; top: -1px; width: 8px; height: 5px; }
.rows { padding-top: 4.500px; }
.row { height: 16.800px; display: flex; align-items: center; font-size: 9.800px; color: #6d6d6d; }
.row .col-name { color: #222; padding-left: 19px; gap: 4px; }
.fo { width: 11px; height: 13px; flex: none; }
.list-vscroll { width: 13px; }
.list-thumb { width: 100%; height: 106px; background: #cdcdcd; }
.list-hscroll { height: 13px; flex: none; display: flex; align-items: center; background: #f0f0f0; padding-left: 6px; }
.list-hscroll .arrow { margin: 0; }
.h-thumb { width: 345px; height: 100%; margin-left: 3px; background: #cdcdcd; }
.right-a { margin-left: auto !important; margin-right: 15px !important; }
.dlg-foot { position: relative; flex: 1; background: #f0f0f0; padding-top: 10px; }
.form { display: grid; grid-template-columns: 96px 459px; column-gap: 3px; row-gap: 2px; grid-auto-rows: 19px; }
.f-label { text-align: right; line-height: 18px; font-size: 10px; color: #444; }
.f-input { display: flex; align-items: center; justify-content: space-between; background: #fff; border: 1px solid #8e8e8e; padding: 0 3px; font-size: 10px; color: #222; }
.f-input.gray { background: #e3e3e3; border-color: #b0b0b0; }
.f-drop { width: 8px; height: 8px; flex: none; }
.actions { display: flex; align-items: center; height: 20px; margin-top: 15px; padding-left: 9px; font-size: 10px; color: #444; }
.hide-folders { display: flex; align-items: center; gap: 5px; width: 222px; padding-top: 3px; font-size: 9.700px; }
.hf { width: 10px; height: 10px; }
.enc-label { width: 38px; }
.enc-select { width: 119px; height: 20px; display: flex; align-items: center; justify-content: space-between; background: #e3e3e3; border: 1px solid #c0c0c0; padding: 0 3px; color: #444; }
.btn { width: 69px; height: 19px; margin-left: 11px; padding: 0; background: #e1e1e1; border: 1px solid #adadad; font: 10px "Noto Sans", "Noto Sans CJK SC", sans-serif; color: #333; }
.btn.primary { border: 2px solid #0a78c8; }
.grip { position: absolute; right: 1px; bottom: 1px; width: 8px; height: 8px; }

.cursor { position: absolute; left: 611px; top: 465px; width: 12px; height: 18px; }

/* IME bar */
.ime { position: absolute; left: 988px; top: 620px; width: 164px; height: 21px; display: flex; align-items: center; }
.ime-s { position: absolute; left: 0; top: 0; width: 21px; height: 20px; background: #e85a24; color: #fff; font: 700 20px/20px "Liberation Sans", sans-serif; text-align: center; transform: rotate(-8deg); z-index: 1; }
.ime-bar { margin-left: 18px; flex: 1; height: 18px; background: #fff; display: flex; align-items: center; gap: 4px; padding-left: 9px; overflow: hidden; }
.ime-a { font-size: 13px; line-height: 18px; color: #1e72c0; width: 10px; }
.ime-i { width: 14px; height: 14px; flex: none; }

/* taskbar */
.taskbar { position: absolute; left: 0; bottom: 0; width: 100%; height: 32px; display: flex; align-items: stretch; background: #1d2f3b; }
.tb-start { width: 38px; display: flex; align-items: center; justify-content: center; }
.win { width: 13px; height: 13px; }
.tb-search { width: 275px; display: flex; align-items: center; gap: 8px; padding-left: 10px; background: #f2f2f2; font-size: 11px; color: #555; }
.mag { width: 14px; height: 14px; }
.tb-btn { width: 39px; display: flex; align-items: center; justify-content: center; }
.tb-i { width: 16px; height: 16px; }
.tb-i.big { width: 19px; height: 19px; }
.tb-gap { width: 2px; }
.tb-app { position: relative; width: 39px; display: flex; align-items: center; justify-content: center; }
.run::after { content: ""; position: absolute; left: 3px; right: 4px; bottom: 0; height: 2px; background: #76b4e2; }
.active { background: #4c5b65; }
.active::after { left: 0; right: 0; }
.tray { margin-left: auto; width: 225px; display: flex; align-items: center; }
.tray-i { width: 12px; height: 12px; margin: 0 4px; flex: none; }
.tray-i.n { margin: 0 3px; }
.tray-i.n2 { margin: 0 2.500px; }
.tray-s { width: 30px; display: flex; justify-content: center; }
.tray-s span { width: 12px; height: 12px; border-radius: 2px; background: #e85a24; color: #fff; font: 700 11px/12px "Liberation Sans", sans-serif; text-align: center; }
.tray-clock { width: 56px; display: flex; flex-direction: column; align-items: center; color: #fff; font-size: 10px; line-height: 14px; }
.tray-note { position: relative; width: 36px; height: 100%; display: flex; align-items: center; justify-content: center; }
.note-i { width: 13px; height: 13px; }
.note-badge { position: absolute; left: 20px; top: 16px; width: 12px; height: 12px; border-radius: 50%; background: #56636c; color: #fff; border: 1px solid #8a949b; font: 700 8px/10px "Liberation Sans", sans-serif; text-align: center; }
```
